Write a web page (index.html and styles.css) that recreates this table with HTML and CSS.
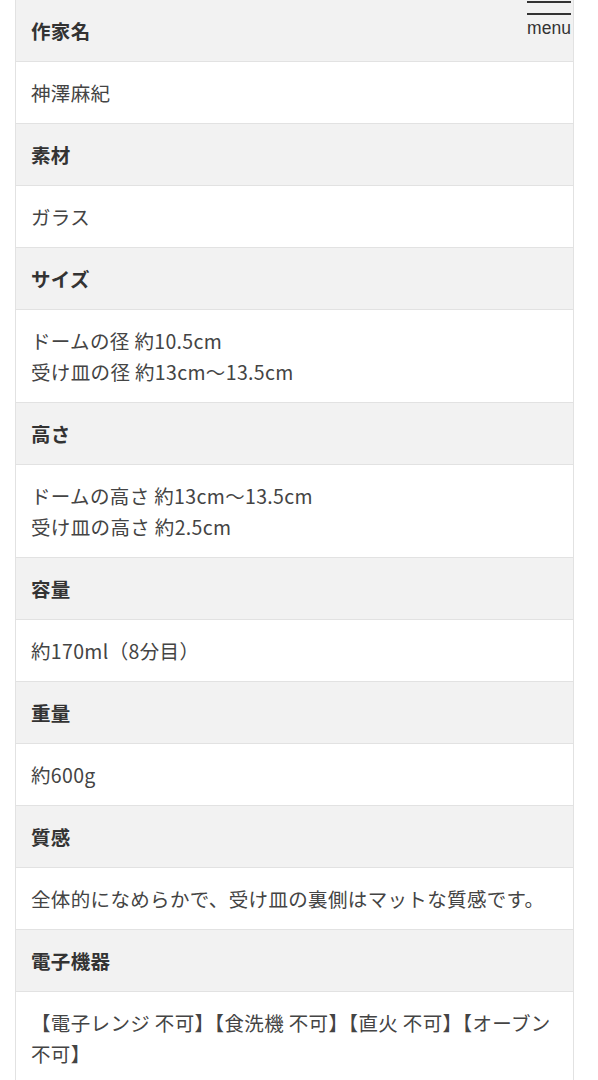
FILE: index.html
```html
<!DOCTYPE html>
<html lang="ja">
<head>
<meta charset="utf-8">
<title>商品詳細</title>
<link rel="stylesheet" href="styles.css">
</head>
<body>
<div class="page">
  <table class="spec">
    <tr><th>作家名</th></tr>
    <tr><td>神澤麻紀</td></tr>
    <tr><th>素材</th></tr>
    <tr><td>ガラス</td></tr>
    <tr><th>サイズ</th></tr>
    <tr><td>ドームの径 約10.5cm<br>受け皿の径 約13cm～13.5cm</td></tr>
    <tr><th>高さ</th></tr>
    <tr><td>ドームの高さ 約13cm～13.5cm<br>受け皿の高さ 約2.5cm</td></tr>
    <tr><th>容量</th></tr>
    <tr><td>約170ml（8分目）</td></tr>
    <tr><th>重量</th></tr>
    <tr><td>約600g</td></tr>
    <tr><th>質感</th></tr>
    <tr><td>全体的になめらかで、受け皿の裏側はマットな質感です。</td></tr>
    <tr><th>電子機器</th></tr>
    <tr><td>【電子レンジ 不可】【食洗機 不可】【直火 不可】【オーブン 不可】</td></tr>
  </table>
</div>
<button class="menu" type="button">
  <span class="bar"></span>
  <span class="bar"></span>
  <span class="bar"></span>
  <span class="label">menu</span>
</button>
</body>
</html>
```
FILE: styles.css
```css
html, body {
  margin: 0;
  padding: 0;
  background: #ffffff;
}
body {
  font-family: "Noto Sans CJK JP", "Noto Sans", sans-serif;
  color: #444444;
}
.page {
  padding: 0 24px 0 15px;
}
.spec {
  width: 100%;
  border-collapse: collapse;
  margin-top: -1px;
}
.spec th,
.spec td {
  border: 1px solid #e2e2e2;
  padding: 15px 15px;
  font-size: 19.5px;
  line-height: 31px;
  letter-spacing: 0.35px;
  text-align: left;
  vertical-align: middle;
}
.spec th {
  background: #f2f2f2;
  font-weight: bold;
  color: #333333;
}
.spec td {
  background: #ffffff;
  font-weight: normal;
  color: #444444;
}
.menu {
  position: absolute;
  top: -11px;
  right: 27px;
  width: 44px;
  padding: 0;
  margin: 0;
  border: 0;
  background: transparent;
  display: flex;
  flex-direction: column;
  gap: 10px;
}
.bar {
  display: block;
  height: 2px;
  background: #333333;
}
.label {
  font-family: "Liberation Sans", Arial, sans-serif;
  font-size: 17.5px;
  line-height: 18px;
  color: #333333;
  margin-top: -6px;
  text-align: center;
}
```
